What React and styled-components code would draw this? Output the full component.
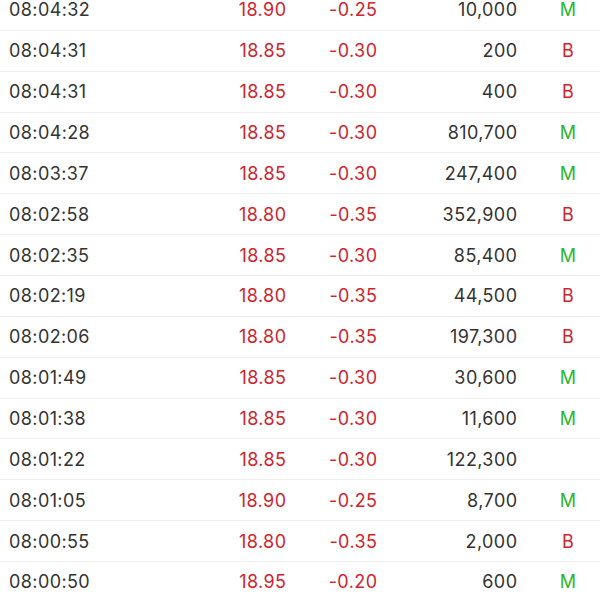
import React from 'react';
import styled, {createGlobalStyle} from 'styled-components';

const GlobalStyle = createGlobalStyle`
  html, body {
    margin: 0;
    padding: 0;
    background: #ffffff;
  }
`

const Viewport = styled.div`
  width: 600px;
  height: 600px;
  overflow: hidden;
  font-family: Inter, "Liberation Sans", Arial, sans-serif;
`

const List = styled.div`
  margin-top: -10px;
`

const Row = styled.div`
  display: grid;
  grid-template-columns: 191px 86px 91px 140px 83px;
  align-items: center;
  height: 40.86px;
  box-sizing: border-box;
  padding-left: 9px;
  border-bottom: 1px solid #efefef;
  font-size: 18px;
  letter-spacing: 0.4px;
`

const Time = styled.span`
  color: #333333;
`

const Num = styled.span`
  text-align: right;
  margin-right: -0.4px;
  color: ${p => (p.$red ? '#d0232d' : '#333333')};
`

const Flag = styled.span`
  padding-left: 19px;
  text-align: center;
  color: ${p => (p.$type === 'M' ? '#2db52d' : '#d0232d')};
`

const trades = [
    ['08:04:32', '18.90', '-0.25', '10,000', 'M'],
    ['08:04:31', '18.85', '-0.30', '200', 'B'],
    ['08:04:31', '18.85', '-0.30', '400', 'B'],
    ['08:04:28', '18.85', '-0.30', '810,700', 'M'],
    ['08:03:37', '18.85', '-0.30', '247,400', 'M'],
    ['08:02:58', '18.80', '-0.35', '352,900', 'B'],
    ['08:02:35', '18.85', '-0.30', '85,400', 'M'],
    ['08:02:19', '18.80', '-0.35', '44,500', 'B'],
    ['08:02:06', '18.80', '-0.35', '197,300', 'B'],
    ['08:01:49', '18.85', '-0.30', '30,600', 'M'],
    ['08:01:38', '18.85', '-0.30', '11,600', 'M'],
    ['08:01:22', '18.85', '-0.30', '122,300', ''],
    ['08:01:05', '18.90', '-0.25', '8,700', 'M'],
    ['08:00:55', '18.80', '-0.35', '2,000', 'B'],
    ['08:00:50', '18.95', '-0.20', '600', 'M'],
]

const App = () => {
    return (
        <Viewport>
            <GlobalStyle/>
            <List>
                {trades.map(([time, price, change, volume, type], i) => (
                    <Row key={i}>
                        <Time>{time}</Time>
                        <Num $red>{price}</Num>
                        <Num $red>{change}</Num>
                        <Num>{volume}</Num>
                        <Flag $type={type}>{type}</Flag>
                    </Row>
                ))}
            </List>
        </Viewport>
    );
};

export default App;
